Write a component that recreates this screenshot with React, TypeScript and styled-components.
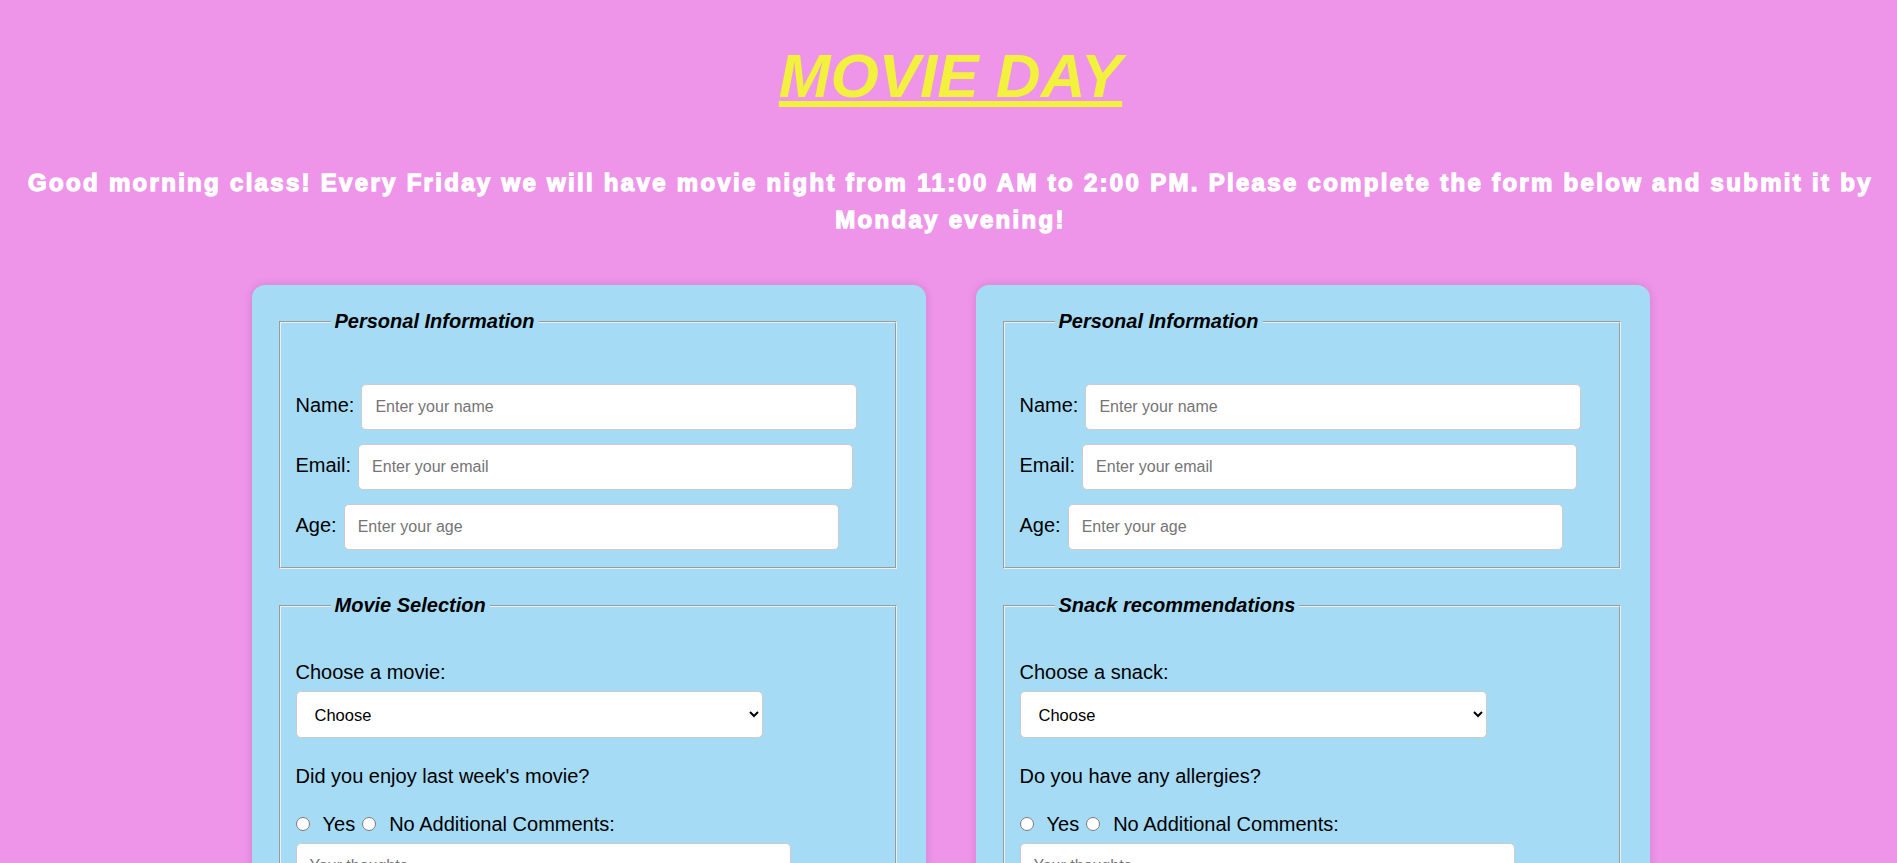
import React from 'react';
import styled, { createGlobalStyle } from 'styled-components';

const GlobalStyle = createGlobalStyle`
  html, body {
    margin: 0;
    padding: 0;
    background: #ee94e9;
  }
  body {
    font-family: "Liberation Sans", Arial, sans-serif;
    overflow: hidden;
  }
`;

const Page = styled.main`
  box-sizing: border-box;
  min-height: 100vh;
  padding: 40px 0 40px 4px;
`;

const Title = styled.h1`
  margin: 0;
  text-align: center;
  font-size: 62px;
  font-weight: bold;
  font-style: italic;
  line-height: 71px;
  color: #f1f13e;
  text-decoration: underline;
  text-decoration-thickness: 6px;
  text-underline-offset: 4px;
`;

const Intro = styled.p`
  margin: 53px 0 0;
  padding: 0 12px;
  text-align: center;
  color: #ffffff;
  font-size: 24px;
  font-weight: bold;
  line-height: 37px;
  letter-spacing: 2.3px;
  -webkit-text-stroke: 1.3px #ffffff;
`;

const Cards = styled.div`
  display: flex;
  justify-content: center;
  align-items: flex-start;
  gap: 50px;
  margin-top: 47px;
`;

const Card = styled.form`
  box-sizing: border-box;
  width: 674px;
  padding: 25px 27px 25px 25px;
  background: #a6dbf6;
  border-radius: 13px;
  box-shadow: 0 0 10px rgba(0, 0, 0, 0.12);
`;

const Fieldset = styled.fieldset`
  margin: 0 2px 25px;
  padding: 44px 15px 10px;
  border: 2px groove ThreeDFace;
  font-size: 20px;
  color: #000;
`;

const Legend = styled.legend`
  margin-left: 35px;
  padding: 0 4px;
  font-size: 20px;
  font-weight: bold;
  font-style: italic;
  line-height: 23px;
`;

const Row = styled.div`
  display: flex;
  align-items: baseline;
  padding: 7px 0;
`;

const InlineLabel = styled.label`
  flex: none;
  margin-right: 7px;
  line-height: 23px;
`;

const TextInput = styled.input`
  flex: none;
  box-sizing: content-box;
  width: 80%;
  height: 18px;
  margin: 0;
  padding: 13px 13px;
  border: 1px solid #cccccc;
  border-radius: 5px;
  background: #ffffff;
  font-family: "Liberation Sans", Arial, sans-serif;
  font-size: 16px;
  color: #000;
  &::placeholder {
    color: #757575;
  }
`;

const BlockLabel = styled.label`
  display: block;
  line-height: 23px;
`;

const Select = styled.select`
  display: block;
  box-sizing: border-box;
  width: 80%;
  height: 47px;
  margin: 7px 0 0;
  padding: 0 4px 0 14px;
  border: 1px solid #cccccc;
  border-radius: 5px;
  background: #ffffff;
  font-family: "Liberation Sans", Arial, sans-serif;
  font-size: 16.5px;
  color: #000;
`;

const Question = styled.p`
  margin: 27px 0 0;
  line-height: 23px;
`;

const RadioRow = styled.div`
  margin-top: 25px;
  line-height: 23px;
`;

const Radio = styled.input<{ $first?: boolean }>`
  width: 14px;
  height: 14px;
  margin: 3px 13px 0 ${(p) => (p.$first ? '0' : '7px')};
  vertical-align: baseline;
`;

const TextArea = styled.textarea`
  display: block;
  box-sizing: content-box;
  width: 80%;
  height: 90px;
  margin: 7px 0 0;
  padding: 13px;
  border: 1px solid #cccccc;
  border-radius: 5px;
  background: #ffffff;
  font-family: "Liberation Sans", Arial, sans-serif;
  font-size: 16px;
  resize: vertical;
  &::placeholder {
    color: #757575;
  }
`;

type FormCardProps = {
  id: string;
  section: string;
  chooseLabel: string;
  question: string;
};

function FormCard({ id, section, chooseLabel, question }: FormCardProps) {
  return (
    <Card onSubmit={(e) => e.preventDefault()}>
      <Fieldset>
        <Legend>Personal Information</Legend>
        <Row>
          <InlineLabel htmlFor={`${id}-name`}>Name:</InlineLabel>
          <TextInput id={`${id}-name`} type="text" placeholder="Enter your name" />
        </Row>
        <Row>
          <InlineLabel htmlFor={`${id}-email`}>Email:</InlineLabel>
          <TextInput id={`${id}-email`} type="email" placeholder="Enter your email" />
        </Row>
        <Row>
          <InlineLabel htmlFor={`${id}-age`}>Age:</InlineLabel>
          <TextInput id={`${id}-age`} type="number" placeholder="Enter your age" />
        </Row>
      </Fieldset>
      <Fieldset>
        <Legend>{section}</Legend>
        <BlockLabel htmlFor={`${id}-choice`}>{chooseLabel}</BlockLabel>
        <Select id={`${id}-choice`} defaultValue="">
          <option value="">Choose</option>
        </Select>
        <Question>{question}</Question>
        <RadioRow>
          <Radio $first type="radio" name={`${id}-q`} id={`${id}-yes`} />
          <label htmlFor={`${id}-yes`}>Yes</label>
          <Radio type="radio" name={`${id}-q`} id={`${id}-no`} />
          <label htmlFor={`${id}-no`}>No</label>{' '}
          <label htmlFor={`${id}-comments`}>Additional Comments:</label>
        </RadioRow>
        <TextArea id={`${id}-comments`} placeholder="Your thoughts..." />
      </Fieldset>
    </Card>
  );
}

export default function App() {
  return (
    <>
      <GlobalStyle />
      <Page>
        <Title>MOVIE DAY</Title>
        <Intro>
          Good morning class! Every Friday we will have movie night from 11:00 AM to 2:00 PM. Please complete
          the form below and submit it by Monday evening!
        </Intro>
        <Cards>
          <FormCard
            id="movie"
            section="Movie Selection"
            chooseLabel="Choose a movie:"
            question="Did you enjoy last week's movie?"
          />
          <FormCard
            id="snack"
            section="Snack recommendations"
            chooseLabel="Choose a snack:"
            question="Do you have any allergies?"
          />
        </Cards>
      </Page>
    </>
  );
}
